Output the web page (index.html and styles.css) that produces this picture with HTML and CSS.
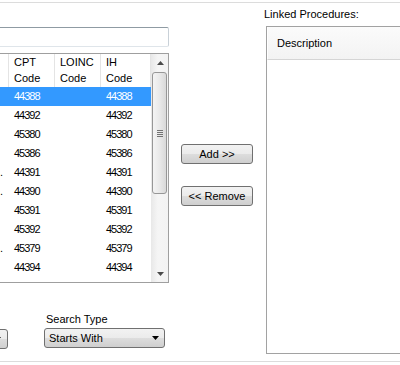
FILE: index.html
```html
<!DOCTYPE html>
<html>
<head>
  <link rel="stylesheet" href="styles.css">
</head>
<body>
  <div class="form">
    <div class="left">
      <input type="text" class="search-box" />

      <div class="grid">
        <div class="grid-main">
          <div class="grid-head">
            <div class="cell col-desc"></div>
            <div class="cell col-cpt">CPT<br>Code</div>
            <div class="cell col-loinc">LOINC<br>Code</div>
            <div class="cell col-ih">IH<br>Code</div>
          </div>
          <div class="grid-row selected">
            <div class="cell col-desc"></div>
            <div class="cell col-cpt num">44388</div>
            <div class="cell col-loinc num"></div>
            <div class="cell col-ih num">44388</div>
          </div>
          <div class="grid-row">
            <div class="cell col-desc"></div>
            <div class="cell col-cpt num">44392</div>
            <div class="cell col-loinc num"></div>
            <div class="cell col-ih num">44392</div>
          </div>
          <div class="grid-row">
            <div class="cell col-desc"></div>
            <div class="cell col-cpt num">45380</div>
            <div class="cell col-loinc num"></div>
            <div class="cell col-ih num">45380</div>
          </div>
          <div class="grid-row">
            <div class="cell col-desc"></div>
            <div class="cell col-cpt num">45386</div>
            <div class="cell col-loinc num"></div>
            <div class="cell col-ih num">45386</div>
          </div>
          <div class="grid-row">
            <div class="cell col-desc">.</div>
            <div class="cell col-cpt num">44391</div>
            <div class="cell col-loinc num"></div>
            <div class="cell col-ih num">44391</div>
          </div>
          <div class="grid-row">
            <div class="cell col-desc">.</div>
            <div class="cell col-cpt num">44390</div>
            <div class="cell col-loinc num"></div>
            <div class="cell col-ih num">44390</div>
          </div>
          <div class="grid-row">
            <div class="cell col-desc"></div>
            <div class="cell col-cpt num">45391</div>
            <div class="cell col-loinc num"></div>
            <div class="cell col-ih num">45391</div>
          </div>
          <div class="grid-row">
            <div class="cell col-desc"></div>
            <div class="cell col-cpt num">45392</div>
            <div class="cell col-loinc num"></div>
            <div class="cell col-ih num">45392</div>
          </div>
          <div class="grid-row">
            <div class="cell col-desc">.</div>
            <div class="cell col-cpt num">45379</div>
            <div class="cell col-loinc num"></div>
            <div class="cell col-ih num">45379</div>
          </div>
          <div class="grid-row">
            <div class="cell col-desc"></div>
            <div class="cell col-cpt num">44394</div>
            <div class="cell col-loinc num"></div>
            <div class="cell col-ih num">44394</div>
          </div>
        </div>

        <div class="vscroll">
          <div class="sb-btn">
            <svg width="7" height="4" viewBox="0 0 7 4"><path d="M0 4H7L3.5 0Z" fill="#4a4a4a"/></svg>
          </div>
          <div class="sb-track">
            <div class="sb-thumb"><span class="sb-grip"></span></div>
          </div>
          <div class="sb-btn">
            <svg width="7" height="4" viewBox="0 0 7 4"><path d="M0 0H7L3.5 4Z" fill="#4a4a4a"/></svg>
          </div>
        </div>
      </div>

      <div class="filters">
        <div class="combo combo-cut">
          <span class="combo-text"></span>
          <svg class="combo-arrow" width="7" height="4" viewBox="0 0 7 4"><path d="M0 0H7L3.5 4Z" fill="#000"/></svg>
        </div>
        <div class="field">
          <div class="field-label">Search Type</div>
          <div class="combo combo-type">
            <span class="combo-text">Starts With</span>
            <svg class="combo-arrow" width="7" height="4" viewBox="0 0 7 4"><path d="M0 0H7L3.5 4Z" fill="#000"/></svg>
          </div>
        </div>
      </div>
    </div>

    <div class="middle">
      <button class="win-btn">Add &gt;&gt;</button>
      <button class="win-btn">&lt;&lt; Remove</button>
    </div>

    <div class="right">
      <div class="caption">Linked Procedures:</div>
      <div class="listview">
        <div class="lv-head">Description</div>
      </div>
    </div>
  </div>
</body>
</html>
```

FILE: styles.css
```css
* {
  box-sizing: border-box;
}

body {
  margin: 0;
  width: 400px;
  height: 365px;
  overflow: hidden;
  background: #fff;
  color: #000;
  font-family: "Liberation Sans", Arial, sans-serif;
  font-size: 11px;
}

.form {
  display: flex;
  margin-top: 2px;
  height: 360px;
  border-top: 1px solid #dcdcdc;
  border-bottom: 1px solid #dcdcdc;
}

/* left side: search box + results grid */
.left {
  width: 169px;
  flex: none;
  padding-top: 24px;
  display: flex;
  flex-direction: column;
}

.search-box {
  display: block;
  width: 173px;
  height: 20px;
  margin: 0 0 0 -4px;
  padding: 0 3px;
  border: 1px solid #c9d1d8;
  border-top-color: #8f9ba3;
  border-bottom-color: #dfe5ea;
  border-radius: 2px;
  background: #fff;
  font: inherit;
  outline: none;
}

.grid {
  display: flex;
  width: 209px;
  height: 230px;
  margin: 6px 0 0 -40px;
  border: 1px solid #9f9f9f;
  background: #fff;
}

.grid-main {
  flex: 1;
  overflow: hidden;
}

.grid-head {
  display: flex;
  height: 33px;
  line-height: 16px;
}

.grid-head .cell {
  border-right: 1px solid #e4e4e4;
}

.grid-row {
  display: flex;
  height: 19px;
  line-height: 19px;
}

.grid-row.selected {
  background: #3399ff;
  color: #fff;
}

.cell {
  flex: none;
  padding-left: 5px;
  white-space: nowrap;
  overflow: hidden;
}

.col-desc {
  width: 48px;
  padding-right: 6px;
  text-align: right;
}

.col-cpt,
.col-loinc {
  width: 46px;
}

.col-ih {
  width: 50px;
}

.num {
  letter-spacing: -1px;
}

/* vertical scrollbar */
.vscroll {
  width: 17px;
  flex: none;
  display: flex;
  flex-direction: column;
  background: linear-gradient(to right, #e8e8e8, #f5f5f5 40%, #f3f3f3);
}

.sb-btn {
  height: 17px;
  display: flex;
  align-items: center;
  justify-content: center;
}

.sb-btn svg {
  display: block;
  margin-left: 1px;
}

.sb-track {
  flex: 1;
  padding: 1px 1px 0 1px;
}

.sb-thumb {
  height: 122px;
  border: 1px solid #979797;
  border-radius: 3px;
  background: linear-gradient(to right, #f4f4f4, #e9e9e9 50%, #d9d9d9);
  display: flex;
  align-items: center;
  justify-content: center;
}

.sb-grip {
  width: 6px;
  height: 7px;
  background: repeating-linear-gradient(#737373 0 1px, transparent 1px 2px);
}

/* bottom filter row */
.filters {
  display: flex;
  align-items: flex-end;
  margin-top: 30px;
}

.field {
  margin-left: 36px;
}

.field-label {
  line-height: 13px;
  padding-left: 2px;
  margin-bottom: 2px;
}

.combo {
  display: flex;
  align-items: center;
  height: 20px;
  padding: 0 6px 0 4px;
  border: 1px solid #707070;
  border-radius: 3px;
  background: linear-gradient(#f2f2f2 0%, #ebebeb 50%, #dddddd 50%, #cfcfcf 100%);
}

.combo-text {
  flex: 1;
  white-space: nowrap;
}

.combo-cut {
  width: 60px;
  margin-left: -52px;
  margin-bottom: -1px;
}

.combo-type {
  width: 121px;
  padding-right: 5px;
}

.combo-arrow {
  display: block;
}

/* middle buttons */
.middle {
  width: 95px;
  flex: none;
  padding: 141px 0 0 12px;
  display: flex;
  flex-direction: column;
  gap: 22px;
}

.win-btn {
  width: 72px;
  height: 20px;
  padding: 0;
  border: 1px solid #707070;
  border-radius: 3px;
  background: linear-gradient(#f2f2f2 0%, #ebebeb 50%, #dddddd 50%, #cfcfcf 100%);
  color: #000;
  font: inherit;
  line-height: 18px;
}

/* right side list */
.right {
  flex: 1;
  min-width: 0;
  overflow: hidden;
  padding-top: 5px;
}

.caption {
  line-height: 13px;
}

.listview {
  width: 200px;
  height: 328px;
  margin: 5px 0 0 2px;
  border: 1px solid #a2a2a2;
  background: #fff;
}

.lv-head {
  height: 33px;
  line-height: 32px;
  padding-left: 9px;
  border-bottom: 1px solid #d5d5d5;
  border-left: 1px solid #fff;
  background: linear-gradient(#fbfbfb, #f3f3f3);
}
```
